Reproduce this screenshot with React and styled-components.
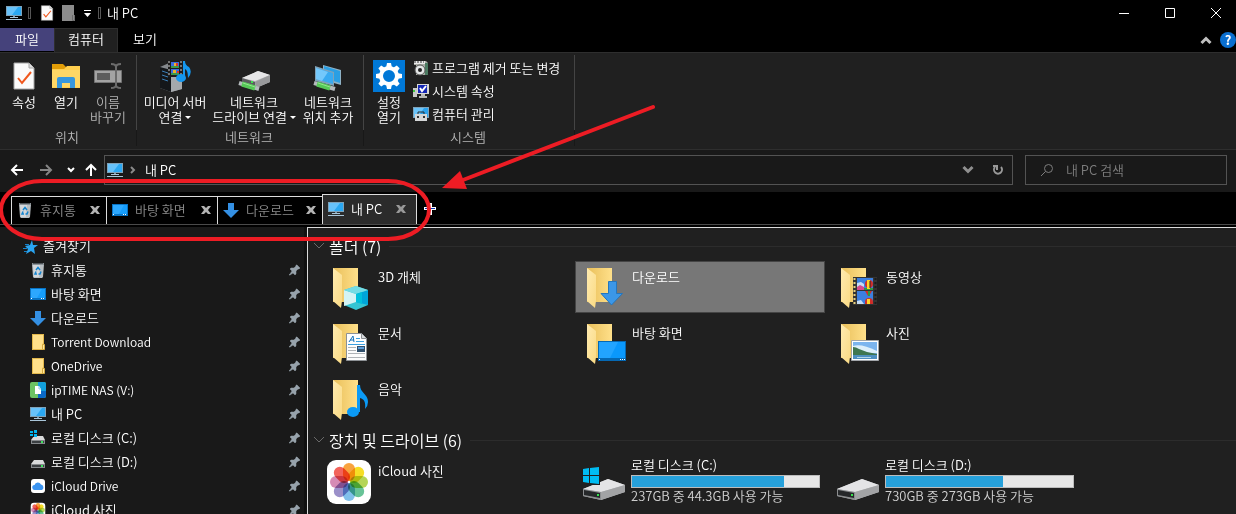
import React, { useState } from 'react';
import styled, { createGlobalStyle } from 'styled-components';

const quickAccess = [
  { name: '휴지통', icon: 'bin' },
  { name: '바탕 화면', icon: 'desktop' },
  { name: '다운로드', icon: 'download' },
  { name: 'Torrent Download', icon: 'folder', latin: true },
  { name: 'OneDrive', icon: 'folder', latin: true },
  { name: 'ipTIME NAS (V:)', icon: 'nas', latin: true },
  { name: '내 PC', icon: 'pc' },
  { name: '로컬 디스크 (C:)', icon: 'diskWin' },
  { name: '로컬 디스크 (D:)', icon: 'disk' },
  { name: 'iCloud Drive', icon: 'cloud', latin: true },
  { name: 'iCloud 사진', icon: 'photos' },
];

const tabs = [
  { name: '휴지통', icon: 'bin', width: 95 },
  { name: '바탕 화면', icon: 'desktop', width: 111 },
  { name: '다운로드', icon: 'download', width: 105 },
  { name: '내 PC', icon: 'pc', width: 94 },
];

const folders = [
  { name: '3D 개체', badge: 'cube' },
  { name: '다운로드', badge: 'arrow' },
  { name: '동영상', badge: 'video' },
  { name: '문서', badge: 'doc' },
  { name: '바탕 화면', badge: 'screen' },
  { name: '사진', badge: 'picture' },
  { name: '음악', badge: 'music' },
];

const drives = [
  { name: '로컬 디스크 (C:)', total: 237, free: 44.3, windows: true },
  { name: '로컬 디스크 (D:)', total: 730, free: 273 },
];

const petals = ['#f7931d', '#f5d800', '#a8ce3a', '#4db985', '#6bb5e8', '#8a7dc0', '#cf77a8', '#f0483e'];

const PhotoPetals = () => (
  <g style={{ isolation: 'isolate' }}>
    {petals.map((color, i) => (
      <rect
        key={color}
        x="16" y="3" width="12" height="18" rx="6"
        fill={color}
        fillOpacity="0.85"
        transform={`rotate(${i * 45} 22 22)`}
        style={{ mixBlendMode: 'multiply' }}
      />
    ))}
    <circle cx="22" cy="22" r="1" fill="#fff" />
  </g>
);

const SmallIcon = ({ name }) => {
  switch (name) {
    case 'bin':
      return (
        <svg width="16" height="16" viewBox="0 0 16 16">
          <path d="M2 2h12l-1 13-1 1H4l-1-1z" fill="#b9bfc3" />
          <path d="M3 3h7l-1 12H4z" fill="#d3d7da" />
          <path d="M2 1h12v2H2z" fill="#8b9297" />
          <path d="M3 1.500h10" stroke="#4e5458" />
          <path d="M6 8l2-2.500L10 8M11 9.500L10 12H8.500M7 12H5l1-2.500" fill="none" stroke="#1585cf" strokeWidth="1.500" />
        </svg>
      );
    case 'desktop':
      return (
        <svg width="16" height="16" viewBox="0 0 16 16">
          <rect y="2" width="16" height="12" fill="#0873c4" />
          <rect x="1" y="3" width="14" height="9" fill="#169dfb" />
          <path d="M1 3h11L7 12H1z" fill="#2ca8ff" />
          <path d="M1 12.500h1M11 12.500h1M13 12.500h1" stroke="#fff" />
        </svg>
      );
    case 'download':
      return (
        <svg width="16" height="16" viewBox="0 0 16 16">
          <path d="M5 1h6v7h5l-8 8-8-8h5z" fill="#3490e4" />
        </svg>
      );
    case 'folder':
      return (
        <svg width="16" height="16" viewBox="0 0 16 16">
          <path d="M2 0h12v16H2z" fill="#e3b84c" />
          <path d="M3 1h10v8l-1 2v4H3z" fill="#ffe08a" />
          <path d="M12.500 10.500h2v5h-2z" fill="#ffe8a0" stroke="#d5a93d" />
        </svg>
      );
    case 'nas':
      return (
        <svg width="16" height="16" viewBox="0 0 16 16">
          <rect width="16" height="16" rx="2" fill="#6dc363" />
          <path d="M8 0h6a2 2 0 0 1 2 2v7H8z" fill="#12a0dc" />
          <path d="M8 9h8v5a2 2 0 0 1-2 2H8z" fill="#0a69c7" />
          <path d="M5 4h4l2 3v5H5z" fill="#fff" />
          <path d="M9 4v3h2" fill="none" stroke="#8bc6e8" />
        </svg>
      );
    case 'pc':
      return (
        <svg width="16" height="16" viewBox="0 0 16 16">
          <path d="M0 1h16v10H0z" fill="#7fa3ba" />
          <path d="M1 2h14v8H1z" fill="#2ba8f2" />
          <path d="M1 2h11L6 10H1z" fill="#67c2fa" />
          <path d="M7 11h2v2H7z" fill="#7b98ac" />
          <path d="M4 12h8v1H4zM0 14h16v1H0z" fill="#a9c5d8" />
        </svg>
      );
    case 'diskWin':
    case 'disk':
      return (
        <svg width="16" height="16" viewBox="0 0 16 16">
          <path d="M4 6h9l2 4H1z" fill="#d9dadb" />
          <path d="M1 10h14v4H1z" fill="#86898c" />
          <path d="M2 11h12v2H2z" fill="#3b3f42" />
          <path d="M11 11h2v2h-2z" fill="#3ee05c" />
          {name === 'diskWin' && (
            <>
              <path d="M0 0h7v7H0z" fill="#191919" />
              <path d="M0 1h3v2H0zM4 0h3v3H4zM0 4h3v2H0zM4 4h3v3H4z" fill="#00b4ee" />
            </>
          )}
        </svg>
      );
    case 'cloud':
      return (
        <svg width="16" height="16" viewBox="0 0 16 16">
          <rect x="1" y="1" width="14" height="14" rx="3" fill="#fff" />
          <path d="M5 12a2.500 2.500 0 0 1-.5-5 3.500 3.500 0 0 1 6.500-.5A3 3 0 0 1 12 12z" fill="#3b94f0" />
        </svg>
      );
    case 'photos':
      return (
        <svg width="16" height="16" viewBox="0 0 44 44">
          <rect x="2" y="2" width="40" height="40" rx="9" fill="#fff" />
          <PhotoPetals />
        </svg>
      );
    default:
      return null;
  }
};

const FolderIcon = ({ badge }) => (
  <svg width="48" height="48" viewBox="0 0 48 48">
    <defs>
      <linearGradient id="folderBack" x1="0" x2="1">
        <stop offset="0" stopColor="#e9bf5a" />
        <stop offset="1" stopColor="#ffe08a" />
      </linearGradient>
      <linearGradient id="folderFront" x1="0" y1="0" x2="1" y2="1">
        <stop offset="0" stopColor="#ffebb0" />
        <stop offset="1" stopColor="#fada84" />
      </linearGradient>
    </defs>
    <path d="M8 5h25v34H8z" fill="url(#folderBack)" />
    <path d="M8 5l9 7v26l-1 7-8-7z" fill="url(#folderFront)" />
    {badge === 'cube' && (
      <g>
        <path d="M31 23l12 4v15l-12 5-12-5V27z" fill="#35c5d4" />
        <path d="M19 27l12 4v8l-12 4z" fill="#d4f3f4" />
        <path d="M31 31l12-4v15l-12-3z" fill="#00a5d9" />
        <path d="M31 23l12 4-12 4-12-4z" fill="#75dce4" />
        <path d="M31 31l6-2v12l-6-2z" fill="#00c0dc" />
      </g>
    )}
    {badge === 'arrow' && (
      <path d="M29.500 18.500h8v12h6L32.500 42 22 30.500h7.500z" fill="#3b97e8" stroke="#2476bd" />
    )}
    {badge === 'video' && (
      <g>
        <path d="M20 14h24v28H20z" fill="#333" />
        <path d="M21.500 15v26" stroke="#e8cf7c" strokeWidth="2" strokeDasharray="2 2" />
        <path d="M42.500 15v26" stroke="#1b1b1b" strokeWidth="2" strokeDasharray="2 2" />
        <path d="M24 15h16v12H24zM24 28h16v13H24z" fill="#3c7fe0" />
        <path d="M24 20l4-1 3 2v3h-7z" fill="#c4dcf5" />
        <path d="M24 24l3-2 4 2v3h-7z" fill="#d54a8d" />
        <path d="M31 25h9v2h-9z" fill="#2f9640" />
        <circle cx="36" cy="21" r="4" fill="#d02d28" />
        <path d="M34 17h3v9h-3z" fill="#ffd526" />
        <path d="M37 18v7" stroke="#222" />
        <path d="M32 28h7l-3 5h-1z" fill="#d02d28" />
        <path d="M35 28h2v5h-2z" fill="#2a9a3e" />
        <path d="M24 38l4-1 3 4h-7z" fill="#c4dcf5" />
        <path d="M32 41v-2a4 4 0 0 1 8 0v2z" fill="#d02d28" />
        <path d="M34 36h3v5h-3z" fill="#ffd526" />
      </g>
    )}
    {badge === 'doc' && (
      <g>
        <path d="M21.500 14.500h15l5 5v22h-20z" fill="#fdfdfd" stroke="#8d9195" />
        <path d="M36.500 14.500v5h5" fill="#d8dbde" stroke="#8d9195" />
        <path d="M24 23l4-6 1 6M25 21h4" fill="none" stroke="#1472bb" />
        <path d="M31 19.500h4M31 22.500h8M23 25.500h17" stroke="#3a9fe0" />
        <path d="M23 28.500h8M23 31.500h8M23 34.500h17M23 38.500h17" stroke="#b0b4b8" />
        <path d="M32 27h8v6h-8z" fill="#31506c" />
        <path d="M33 28h6v2h-6z" fill="#5b9ddb" />
      </g>
    )}
    {badge === 'screen' && (
      <g>
        <path d="M19 22h28v20H19z" fill="#0568b3" />
        <path d="M20 23h26v16H20z" fill="#0a98fc" />
        <path d="M20 23h19l-8 16H20z" fill="#22a4ff" />
        <path d="M20 40.500h1M41 40.500h1M43 40.500h1M45 40.500h1" stroke="#fff" />
      </g>
    )}
    {badge === 'picture' && (
      <g>
        <path d="M18.500 21.500h27v20h-27z" fill="#fff" stroke="#a2a6aa" />
        <path d="M20 23h24v17H20z" fill="#7bb4ee" />
        <path d="M20 27q8-3 24 5v2H20z" fill="#dceefa" />
        <path d="M20 28q3 0 6 2l8 3 10 2v1H20z" fill="#3f7650" />
        <path d="M20 36h24v4H20z" fill="#4e8fc0" />
        <path d="M24 38.500h14" stroke="#b3d5e8" />
      </g>
    )}
    {badge === 'music' && (
      <g fill="#0b9af5">
        <ellipse cx="28" cy="37" rx="6" ry="5" />
        <path d="M32 10h3c0 8 8 9 8 17q0 4-3 7c1-7-1-10-5-11v14h-3z" />
      </g>
    )}
  </svg>
);

const DriveIcon = ({ windows }) => (
  <svg width="48" height="48" viewBox="0 0 48 48">
    <path d="M4 32l25-10 17 6v7L22 43 4 39z" fill="#b9babc" />
    <path d="M4 32l25-10 17 6-24 7z" fill="#e4e4e6" />
    <path d="M22 35l24-7v7L22 43z" fill="#a2a3a5" />
    <path d="M4 32l18 3v8L4 39z" fill="#8b8d8f" />
    <path d="M5 33l16 3v5L5 38z" fill="#26282a" />
    <path d="M18 37h2v2h-2z" fill="#35e24e" />
    {windows && (
      <>
        <path d="M3 10h18v18H3z" fill="#202020" />
        <path d="M4 12l6-1v7H4zM11 11l9-1v8h-9zM4 19h6v7l-6-1zM11 19h9v8l-9-1z" fill="#00bcf2" />
      </>
    )}
  </svg>
);

const MediaServerIcon = () => (
  <svg width="32" height="32" viewBox="0 0 32 32">
    <path d="M1 7l9-4 13 4v22l-11 3L1 28z" fill="#85898d" />
    <path d="M1 7l11 3v22L1 28z" fill="#14171a" />
    <path d="M12 11l11-4v22l-11 3z" fill="#a5a9ac" />
    <path d="M3 11l6 2M3 15l6 2M3 19l6 2" stroke="#3a7fb8" />
    <path d="M9 1h14v16H9z" fill="#1d1d1d" />
    <path d="M10 1v16M22 1v16" stroke="#d0d0d0" strokeDasharray="2 2" />
    <path d="M12 2h8v6h-8zM12 9h8v6h-8z" fill="#3d6ce2" />
    <path d="M12 6h8v2h-8zM12 13h8v2h-8z" fill="#3a9950" />
    <path d="M15 3h4v3h-4zM14 10h3v3h-3z" fill="#e8b52a" />
    <path d="M17 3h2v3h-2zM18 11h2v2h-2z" fill="#d9362d" />
    <ellipse cx="22" cy="18" rx="5" ry="4" fill="#1597ee" />
    <path d="M24 1h2q0 4 4 6 4 5-1 11 0-8-3-9v10h-2z" fill="#1597ee" />
  </svg>
);

const NetDriveIcon = () => (
  <svg width="34" height="32" viewBox="0 0 34 32">
    <path d="M5 18l16-7 12 4v7l-14 6-14-5z" fill="#b3b4b6" />
    <path d="M5 18l16-7 12 4-15 6z" fill="#e6e6e7" />
    <path d="M5 18l13 4v6L5 24z" fill="#5b5d5f" />
    <path d="M18 22l15-7v7l-14 6z" fill="#98999b" />
    <path d="M14 21h2v2h-2z" fill="#3ee052" />
    <path d="M2 23l20 6" stroke="#b4babd" strokeWidth="4" />
    <path d="M5 24l13 4" stroke="#55c957" strokeWidth="5" />
    <path d="M6 23l12 4" stroke="#93e48f" strokeWidth="1" />
  </svg>
);

const NetPlaceIcon = () => (
  <svg width="32" height="32" viewBox="0 0 32 32">
    <path d="M11 5l18 5v15l-18-5z" fill="#8fb2c6" />
    <path d="M12 6l16 5v12l-16-5z" fill="#2a9fe4" />
    <path d="M3 6l19 6v14L3 21z" fill="#7fa3ba" />
    <path d="M4 8l17 5v11L4 19z" fill="#39aaf1" />
    <path d="M4 8l12 4-6 9-6-2z" fill="#74c8fb" />
    <path d="M2 23l21 6" stroke="#b4babd" strokeWidth="4" />
    <path d="M5 24l13 4" stroke="#55c957" strokeWidth="5" />
    <path d="M6 23l12 4" stroke="#93e48f" strokeWidth="1" />
  </svg>
);

const PropertiesIcon = ({ width = 24, height = 32 }) => (
  <svg width={width} height={height} viewBox="0 0 24 32">
    <path d="M2 3h15l5 5v21H2z" fill="#fbfbfb" stroke="#a6a6a6" strokeWidth="1" />
    <path d="M17 3v5h5" fill="#dedede" stroke="#a6a6a6" />
    <path d="M6 18l4 5 9-11" fill="none" stroke="#f0571d" strokeWidth="2" />
  </svg>
);

const OpenIcon = () => (
  <svg width="30" height="32" viewBox="0 0 30 32">
    <path d="M1 4h11l3 3v4H1z" fill="#e29d07" />
    <path d="M1 9h12l3-3h13v22H1z" fill="#ffcf4f" />
    <path d="M1 10h28v17H1z" fill="#ffd766" />
    <path d="M6 28V19q0-2 2-2h14q2 0 2 2v9h-5v-5h-8v5z" fill="#3797dd" />
  </svg>
);

const RenameIcon = () => (
  <svg width="30" height="32" viewBox="0 0 30 32">
    <path d="M1.500 10.500h27v12h-27z" fill="#a3a3a3" stroke="#737373" />
    <path d="M4 13h13v7H4z" fill="#5d5d5d" />
    <path d="M18 4q5 0 5 3v18q0 3-5 3M28 4q-5 0-5 3M23 25q0 3 5 3" fill="none" stroke="#6b6b6b" strokeWidth="2" />
  </svg>
);

const teeth = [0, 45, 90, 135, 180, 225, 270, 315];

const GearIcon = () => (
  <svg width="32" height="32" viewBox="0 0 32 32">
    <path d="M0 0h32v32H0z" fill="#0078d7" />
    <circle cx="16" cy="16" r="8" fill="none" stroke="#fff" strokeWidth="4" />
    {teeth.map(a => (
      <path key={a} d="M14 3h4l1 5h-6z" fill="#fff" transform={`rotate(${a} 16 16)`} />
    ))}
  </svg>
);

const UninstallIcon = () => (
  <svg width="16" height="16" viewBox="0 0 16 16">
    <path d="M1 1h12l2 2v12H3V5H1z" fill="#a9aba5" />
    <path d="M1 1h11v3H1z" fill="#e9e9e9" />
    <path d="M1 2h10" stroke="#333" strokeDasharray="2 1" />
    <path d="M12 3h3v12h-3z" fill="#4b7a61" />
    <circle cx="7" cy="10" r="5" fill="#e4e6e6" stroke="#555" />
    <circle cx="7" cy="10" r="2" fill="#222" />
  </svg>
);

const SystemIcon = () => (
  <svg width="16" height="16" viewBox="0 0 16 16">
    <path d="M0 5h4v9H0z" fill="#c8cac8" />
    <path d="M0 7h2v2H0z" fill="#42c840" />
    <path d="M4 1h12v10H4z" fill="#d8d8d4" />
    <path d="M5 2h9v8H5z" fill="#1426b4" />
    <path d="M7 5l2 3 4-5" fill="none" stroke="#fff" strokeWidth="2" />
    <path d="M8 11h4v2h2v2H6v-2h2z" fill="#b6b8b6" />
  </svg>
);

const ManageIcon = () => (
  <svg width="16" height="16" viewBox="0 0 16 16">
    <path d="M0 1h16v11H0z" fill="#7fa3ba" />
    <path d="M1 2h14v9H1z" fill="#2ba3ee" />
    <path d="M1 2h10L5 11H1z" fill="#6bc4fa" />
    <path d="M5 8V6h6v2" fill="none" stroke="#2c2c2c" strokeWidth="1" />
    <path d="M2 8h12v7H2z" fill="#d5d7d8" />
    <path d="M4 10h2v2H4zM10 10h2v2h-2z" fill="#333" />
  </svg>
);

const PinIcon = () => (
  <svg width="12" height="12" viewBox="0 0 12 12">
    <path d="M8 1l3 3-1 1H9L7 7v3L6 11 4 9l-3 2H0l1-1 2-3-2-2 1-1h3l2-2V1z" fill="#97a2ab" stroke="#97a2ab" strokeWidth="0.500" />
  </svg>
);

const StarIcon = () => (
  <svg width="15" height="15" viewBox="0 0 15 15">
    <path d="M9 1l1 5h5l-4 3 1 6-4-3-5 3 2-5-3-3 5-1z" fill="#2aa5f2" />
    <path d="M2 5.500h4M0 9.500h4M1 12.500h3" stroke="#1582ca" />
  </svg>
);

const Chevron = ({ color = '#fff', size = 8, up }) => (
  <svg width={size} height={size} viewBox="0 0 8 8">
    <path d={up ? 'M1 6l3-3 3 3' : 'M1 2l3 3 3-3'} fill="none" stroke={color} strokeWidth="2" />
  </svg>
);

const Arrow = ({ color = '#fff', turn = 0 }) => (
  <svg width="14" height="14" viewBox="0 0 14 14">
    <path
      d="M13 7H2M7 2L2 7l5 5"
      fill="none" stroke={color} strokeWidth="2"
      transform={`rotate(${turn} 7 7)`}
    />
  </svg>
);

const CloseIcon = ({ active }) => (
  <svg width="10" height="8" viewBox="0 0 10 8">
    <path d="M0 0h3l2 2 2-2h3L7 4l3 4H7L5 6 3 8H0l3-4z" fill={active ? '#999' : '#b4b4b4'} />
  </svg>
);

const SectionChevron = () => (
  <svg width="12" height="8" viewBox="0 0 12 8">
    <path d="M1 1l5 5 5-5" fill="none" stroke="#6a6a6a" />
  </svg>
);

const Callout = () => (
  <CalloutSvg width="660" height="245" viewBox="0 0 660 245" aria-hidden="true">
    <rect x="1" y="181" width="428" height="58" rx="41" ry="29" fill="none" stroke="#ed1c24" strokeWidth="4" />
    <path d="M653 107L463 180" stroke="#ed1c24" strokeWidth="4" strokeLinecap="round" />
    <path d="M442 188l18-17 7 18z" fill="#ed1c24" />
  </CalloutSvg>
);

const App = () => {
  const [activeTab, setActiveTab] = useState(3);
  const [selected, setSelected] = useState('다운로드');
  const [query, setQuery] = useState('');

  return (
    <Window>
      <GlobalStyle />

      <TitleBar>
        <SmallIcon name="pc" />
        <Grip />
        <QuickTools>
          <PlainButton aria-label="속성"><PropertiesIcon width={14} height={18} /></PlainButton>
          <PlainButton aria-label="새 폴더">
            <svg width="14" height="16" viewBox="0 0 14 16">
              <path d="M0 0h12v10h1v6H0z" fill="#8c8c8c" />
              <path d="M10.500 10v5.500h2V10" fill="none" stroke="#6c6c6c" />
            </svg>
          </PlainButton>
          <PlainButton aria-label="사용자 지정">
            <svg width="7" height="7" viewBox="0 0 7 7">
              <path d="M0 0h7v1H0zM0 3h7L3.500 7z" fill="#fff" />
            </svg>
          </PlainButton>
        </QuickTools>
        <Grip />
        <Title>내 PC</Title>
        <WindowButtons>
          <WindowButton aria-label="최소화">
            <svg width="10" height="10"><path d="M0 5.500h10" stroke="#fff" /></svg>
          </WindowButton>
          <WindowButton aria-label="최대화">
            <svg width="10" height="10"><path d="M.5.5h9v9h-9z" fill="none" stroke="#fff" /></svg>
          </WindowButton>
          <WindowButton aria-label="닫기">
            <svg width="10" height="10"><path d="M0 0l10 10M10 0L0 10" stroke="#fff" /></svg>
          </WindowButton>
        </WindowButtons>
      </TitleBar>

      <RibbonTabs>
        <FileTab>파일</FileTab>
        <RibbonTab $active>컴퓨터</RibbonTab>
        <RibbonTab>보기</RibbonTab>
        <RibbonTools>
          <PlainButton aria-label="리본 최소화"><Chevron up size={12} color="#c0c0c0" /></PlainButton>
          <HelpButton aria-label="도움말">?</HelpButton>
        </RibbonTools>
      </RibbonTabs>

      <Ribbon>
        <RibbonGroup $width={136}>
          <RibbonItems>
            <RibbonButton $width={42}><PropertiesIcon />속성</RibbonButton>
            <RibbonButton $width={42}><OpenIcon />열기</RibbonButton>
            <RibbonButton $width={42} disabled><RenameIcon />이름<br />바꾸기</RibbonButton>
          </RibbonItems>
          <GroupLabel>위치</GroupLabel>
        </RibbonGroup>
        <RibbonGroup $width={226}>
          <RibbonItems>
            <RibbonButton $width={70}>
              <MediaServerIcon />미디어 서버<span>연결 <Caret /></span>
            </RibbonButton>
            <RibbonButton $width={88}>
              <NetDriveIcon />네트워크<span>드라이브 연결 <Caret /></span>
            </RibbonButton>
            <RibbonButton $width={60}><NetPlaceIcon />네트워크<br />위치 추가</RibbonButton>
          </RibbonItems>
          <GroupLabel>네트워크</GroupLabel>
        </RibbonGroup>
        <RibbonGroup $width={210}>
          <RibbonItems>
            <RibbonButton $width={44}><GearIcon />설정<br />열기</RibbonButton>
            <RibbonList>
              <ListButton><UninstallIcon />프로그램 제거 또는 변경</ListButton>
              <ListButton><SystemIcon />시스템 속성</ListButton>
              <ListButton><ManageIcon />컴퓨터 관리</ListButton>
            </RibbonList>
          </RibbonItems>
          <GroupLabel>시스템</GroupLabel>
        </RibbonGroup>
      </Ribbon>

      <NavBar>
        <NavButtons>
          <PlainButton aria-label="뒤로"><Arrow /></PlainButton>
          <PlainButton aria-label="앞으로"><Arrow color="#858585" turn={180} /></PlainButton>
          <PlainButton aria-label="최근 위치"><Chevron /></PlainButton>
          <PlainButton aria-label="위로"><Arrow turn={90} /></PlainButton>
        </NavButtons>
        <AddressBar>
          <SmallIcon name="pc" />
          <svg width="6" height="8" viewBox="0 0 6 8">
            <path d="M1 1l3 3-3 3" fill="none" stroke="#8a8a8a" strokeWidth="2" />
          </svg>
          <Crumb>내 PC</Crumb>
          <AddressTools>
            <PlainButton aria-label="이전 위치"><Chevron size={12} color="#8f8f8f" /></PlainButton>
            <PlainButton aria-label="새로 고침">
              <svg width="12" height="12" viewBox="0 0 12 12">
                <path d="M3 3a4 4 0 1 0 6 0" fill="none" stroke="#999" strokeWidth="2" />
                <path d="M1 1h5v5H4V3H1z" fill="#999" />
              </svg>
            </PlainButton>
          </AddressTools>
        </AddressBar>
        <SearchBox>
          <svg width="14" height="14" viewBox="0 0 14 14">
            <circle cx="8.500" cy="5.500" r="4" fill="none" stroke="#7d7d7d" />
            <path d="M5.500 8.500L1 13" stroke="#7d7d7d" />
          </svg>
          <SearchInput
            type="text"
            aria-label="내 PC 검색"
            placeholder="내 PC 검색"
            value={query}
            onChange={e => setQuery(e.target.value)}
          />
        </SearchBox>
      </NavBar>

      <TabStrip>
        {tabs.map((tab, i) => (
          <Tab key={tab.name} $width={tab.width} $active={i === activeTab}>
            <TabButton $active={i === activeTab} onClick={() => setActiveTab(i)}>
              <SmallIcon name={tab.icon} />
              {tab.name}
            </TabButton>
            <PlainButton aria-label={`${tab.name} 닫기`}>
              <CloseIcon active={i === activeTab} />
            </PlainButton>
          </Tab>
        ))}
        <NewTab aria-label="새 탭">
          <svg width="12" height="12" viewBox="0 0 12 12">
            <path d="M5 0h3v4h4v3H8v5H5V7H0V4h5z" fill="#fff" />
            <path d="M1 5h10v1H1z" fill="#0b35b5" />
          </svg>
        </NewTab>
      </TabStrip>

      <Body>
        <Sidebar>
          <SidebarHeading><StarIcon />즐겨찾기</SidebarHeading>
          {quickAccess.map(item => (
            <SidebarRow key={item.name}>
              <SmallIcon name={item.icon} />
              <RowName $latin={item.latin}>{item.name}</RowName>
              <PinIcon />
            </SidebarRow>
          ))}
        </Sidebar>

        <Content>
          <SectionHeader>
            <SectionChevron />
            폴더 (7)
          </SectionHeader>
          <Grid>
            {folders.map(folder => (
              <Item
                key={folder.name}
                $selected={folder.name === selected}
                onClick={() => setSelected(folder.name)}
              >
                <FolderIcon badge={folder.badge} />
                <ItemName>{folder.name}</ItemName>
              </Item>
            ))}
          </Grid>

          <SectionHeader>
            <SectionChevron />
            장치 및 드라이브 (6)
          </SectionHeader>
          <Grid>
            <Item>
              <svg width="48" height="48" viewBox="-2 -3 48 48">
                <rect width="44" height="44" rx="9" fill="#fff" />
                <PhotoPetals />
              </svg>
              <ItemName>iCloud 사진</ItemName>
            </Item>
            {drives.map(drive => (
              <Item key={drive.name}>
                <DriveIcon windows={drive.windows} />
                <DriveInfo>
                  <span>{drive.name}</span>
                  <UsageBar>
                    <Usage style={{ width: `${100 - (drive.free / drive.total) * 100}%` }} />
                  </UsageBar>
                  <FreeSpace>{drive.total}GB 중 {drive.free}GB 사용 가능</FreeSpace>
                </DriveInfo>
              </Item>
            ))}
          </Grid>
        </Content>
      </Body>

      <Callout />
    </Window>
  );
};

const GlobalStyle = createGlobalStyle`
  * { box-sizing: border-box; }
  body {
    margin: 0;
    background: #000;
    overflow: hidden;
  }
  button, input {
    font: inherit;
    color: inherit;
  }
  svg {
    display: block;
    flex: none;
  }
`;

const Window = styled.div`
  position: relative;
  display: flex;
  flex-direction: column;
  height: 100vh;
  overflow: hidden;
  background: #000;
  color: #fff;
  font-family: 'Noto Sans CJK KR', sans-serif;
  font-size: 13px;
  font-weight: 350;
  line-height: 16px;
`;

const CalloutSvg = styled.svg`
  position: absolute;
  top: 0;
  left: 0;
  pointer-events: none;
`;

const PlainButton = styled.button`
  display: flex;
  align-items: center;
  justify-content: center;
  padding: 0;
  border: none;
  background: none;
`;

const TitleBar = styled.header`
  display: flex;
  align-items: center;
  flex: none;
  gap: 6px;
  height: 26px;
  padding-left: 6px;
`;

const Grip = styled.span`
  width: 3px;
  height: 12px;
  border: 1px solid #555;
`;

const QuickTools = styled.div`
  display: flex;
  align-items: center;
  gap: 8px;
  padding: 0 1px 0 3px;
`;

const Title = styled.span`
  flex: 1;
`;

const WindowButtons = styled.div`
  display: flex;
`;

const WindowButton = styled(PlainButton)`
  width: 46px;
  height: 24px;

  &:last-child {
    width: 43px;
    padding-left: 3px;
  }
`;

const RibbonTabs = styled.nav`
  display: flex;
  align-items: stretch;
  flex: none;
  height: 26px;
  padding-top: 2px;
`;

const RibbonTab = styled.button`
  width: ${props => (props.$active ? 64 : 54)}px;
  padding: 0 0 3px;
  border: 1px solid ${props => (props.$active ? '#2e2e2e' : 'transparent')};
  border-bottom: none;
  background: ${props => (props.$active ? '#202020' : 'none')};
`;

const FileTab = styled(RibbonTab)`
  margin-bottom: 1px;
  padding: 0 0 2px;
  border: none;
  background: #45427b;
`;

const RibbonTools = styled.div`
  display: flex;
  align-items: center;
  gap: 8px;
  margin-left: auto;
`;

const HelpButton = styled(PlainButton)`
  width: 16px;
  height: 16px;
  border-radius: 50%;
  background: #0a6fd0;
  font-weight: 700;
`;

const Ribbon = styled.section`
  display: flex;
  flex: none;
  height: 98px;
  padding-top: 2px;
  border: solid #2e2e2e;
  border-width: 1px 0;
  background: #202020;
`;

const RibbonGroup = styled.div`
  display: flex;
  flex-direction: column;
  width: ${props => props.$width + 1}px;
  margin-bottom: 3px;
  border-right: 1px solid;
  border-image: linear-gradient(#444 82%, #181818 82%) 1;
`;

const RibbonItems = styled.div`
  display: flex;
  flex: 1;
  min-height: 0;
  padding: 5px 3px 0;
`;

const RibbonButton = styled(PlainButton)`
  flex-direction: column;
  justify-content: flex-start;
  width: ${props => props.$width}px;
  line-height: 15px;
  white-space: nowrap;

  svg {
    margin-bottom: 2px;
  }

  &:disabled {
    color: #b5b5b5;
  }
`;

const Caret = styled.i`
  display: inline-block;
  margin-bottom: 3px;
  border: 3px solid transparent;
  border-top-color: #fff;
  border-bottom: none;
`;

const GroupLabel = styled.div`
  height: 17px;
  padding-right: 2px;
  color: #b8b8b8;
  text-align: center;
`;

const RibbonList = styled.div`
  display: flex;
  flex-direction: column;
  padding-left: 2px;
`;

const ListButton = styled(PlainButton)`
  flex: none;
  justify-content: flex-start;
  gap: 3px;
  height: 23px;
  padding-bottom: 7px;
  white-space: nowrap;
`;

const NavBar = styled.div`
  display: flex;
  align-items: flex-start;
  flex: none;
  height: 42px;
  padding: 5px 9px 0 10px;
  background: #191919;
`;

const NavButtons = styled.div`
  display: flex;
  align-items: center;
  gap: 15px;
  width: 94px;
  height: 30px;

  ${PlainButton}:nth-child(3) {
    margin: 0 -6px 0 -1px;
  }
`;

const AddressBar = styled.div`
  display: flex;
  align-items: center;
  flex: 1;
  gap: 7px;
  height: 30px;
  margin-right: 12px;
  padding-left: 2px;
  border: 1px solid #535353;
`;

const Crumb = styled(PlainButton)`
  padding: 0 0 1px 2px;
`;

const AddressTools = styled.div`
  display: flex;
  align-items: center;
  gap: 18px;
  margin-left: auto;
  padding-right: 8px;
`;

const SearchBox = styled.label`
  display: flex;
  align-items: center;
  gap: 12px;
  width: 202px;
  height: 30px;
  padding-left: 14px;
  border: 1px solid #535353;
`;

const SearchInput = styled.input`
  flex: 1;
  min-width: 0;
  padding: 0;
  border: none;
  outline: none;
  background: none;

  &::placeholder {
    color: #7d7d7d;
    opacity: 1;
  }
`;

const TabStrip = styled.div`
  display: flex;
  align-items: flex-end;
  flex: none;
  height: 33px;
  padding-left: 11px;
  border-bottom: 1px solid #4a4a4a;
`;

const Tab = styled.div`
  display: flex;
  align-items: center;
  justify-content: space-between;
  width: ${props => props.$width + (props.$active ? 1 : 0)}px;
  height: ${props => (props.$active ? 30 : 28)}px;
  padding: 0 ${props => (props.$active ? 10 : 6)}px 1px 5px;
  border: solid #dcdcdc;
  border-width: 1px ${props => (props.$active ? 1 : 0)}px 0 1px;
  background: ${props => (props.$active ? '#2b2b2b' : '#000')};
`;

const TabButton = styled(PlainButton)`
  gap: 7px;
  color: ${props => (props.$active ? '#fff' : '#8c8c8c')};
`;

const NewTab = styled(PlainButton)`
  width: 26px;
  height: 31px;
`;

const Body = styled.div`
  display: flex;
  flex: 1;
  min-height: 0;
  padding-top: 2px;
`;

const Sidebar = styled.nav`
  flex: none;
  width: 307px;
  padding-top: 7px;
  border-right: 3px solid #111;
  background: #191919;
  overflow: hidden;
`;

const SidebarRow = styled.a.attrs({ href: '#' })`
  display: flex;
  align-items: center;
  gap: 5px;
  height: 24px;
  padding: 0 3px 0 30px;
  color: #fff;
  text-decoration: none;
`;

const SidebarHeading = styled(SidebarRow)`
  padding-left: 23px;
`;

const RowName = styled.span`
  flex: 1;
  font-size: ${props => (props.$latin ? 12 : 13)}px;
`;

const Content = styled.main`
  flex: 1;
  min-width: 0;
  padding-top: 6px;
  border: solid #dcdcdc;
  border-width: 1px 0 0 1px;
  background: #202020;
  overflow: hidden;
`;

const SectionHeader = styled.h2`
  display: flex;
  align-items: center;
  gap: 4px;
  height: 24px;
  margin: 0;
  padding-left: 5px;
  font-size: 16px;
  font-weight: inherit;

  &::after {
    content: '';
    flex: 1;
    height: 1px;
    margin-left: 4px;
    background: #2c2c2c;
  }
`;

const Grid = styled.div`
  display: grid;
  grid-template-columns: repeat(auto-fill, 250px);
  gap: 4px;
  max-width: 780px;
  padding: 3px 0 3px 13px;
`;

const Item = styled.div`
  display: flex;
  gap: 4px;
  height: 52px;
  padding: 1px 3px;
  border: 1px solid ${props => (props.$selected ? '#454545' : 'transparent')};
  background: ${props => (props.$selected ? '#777' : 'none')};
`;

const ItemName = styled.span`
  padding: 6px 0 0 1px;
`;

const DriveInfo = styled.div`
  display: flex;
  flex-direction: column;
  width: 189px;
`;

const UsageBar = styled.div`
  flex: none;
  height: 13px;
  margin: 2px 0 0;
  border: 1px solid #bcbcbc;
  background: #e6e6e6;
`;

const Usage = styled.div`
  height: 100%;
  background: #26a0da;
`;

const FreeSpace = styled.span`
  color: #d0d0d0;
`;

export default App;
